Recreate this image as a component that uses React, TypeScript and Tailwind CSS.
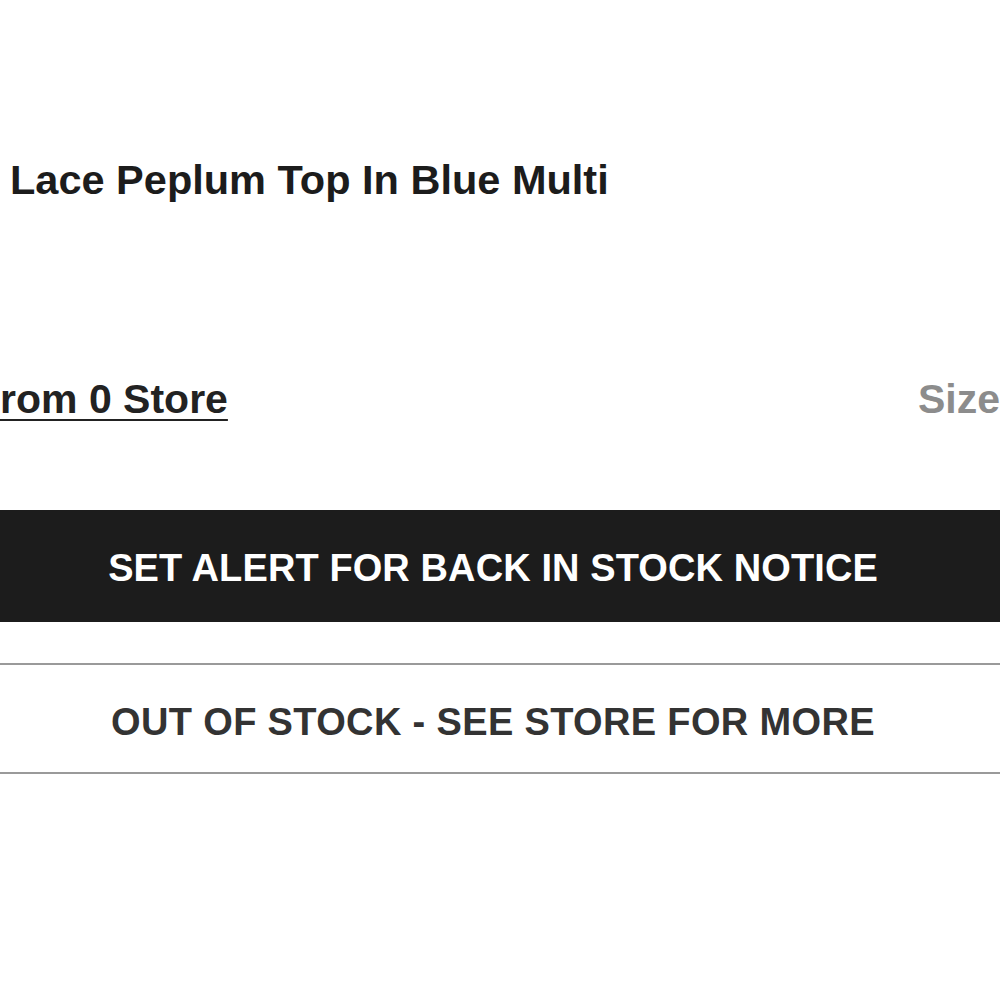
export default function App() {
  return (
    <div className="h-[1000px] w-[1000px] overflow-hidden bg-white font-['Liberation_Sans',Arial,sans-serif]">
      <div className="ml-[-22px] w-[1030px]">
        {/* product title */}
        <h1 className="mt-[159px] pl-[32px] text-[41.5px] leading-[42px] font-bold text-[#1c1c1c]">
          Lace Peplum Top In Blue Multi
        </h1>

        {/* store availability + size guide */}
        <div className="mt-[178px] flex items-start justify-between">
          <a className="ml-[-3px] text-[41px] leading-[40px] font-bold text-[#222] underline decoration-2 underline-offset-[6px]">
            From 0 Store
          </a>
          <span className="mr-[8px] text-[41px] leading-[40px] font-bold text-[#8c8c8c]">Size</span>
        </div>

        <button className="mt-[91px] flex h-[112px] w-full items-center justify-center bg-[#1c1c1c] pt-[4px] text-[38px] font-bold tracking-[0.1px] text-white">
          SET ALERT FOR BACK IN STOCK NOTICE
        </button>

        <div className="mt-[41px] flex h-[111px] w-full items-center justify-center border-y-2 border-[#9a9a9a] pt-[8px] text-[38px] font-bold tracking-[0.35px] text-[#333]">
          OUT OF STOCK - SEE STORE FOR MORE
        </div>
      </div>
    </div>
  );
}
